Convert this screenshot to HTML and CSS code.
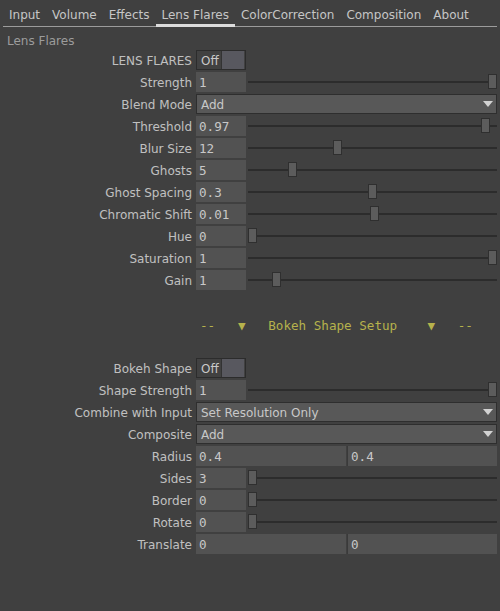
FILE: index.html
```html
<!DOCTYPE html>
<html>
<head>
<meta charset="utf-8">
<link rel="stylesheet" href="styles.css">
</head>
<body>
<div class="tabs">
  <div class="tab">Input</div>
  <div class="tab">Volume</div>
  <div class="tab">Effects</div>
  <div class="tab active">Lens Flares</div>
  <div class="tab">ColorCorrection</div>
  <div class="tab">Composition</div>
  <div class="tab">About</div>
</div>
<div class="section-title">Lens Flares</div>
<div class="form">
  <div class="label">LENS FLARES</div>
  <div class="control"><div class="toggle"><span class="toggle-text">Off</span><span class="toggle-knob"></span></div></div>

  <div class="label">Strength</div>
  <div class="control slider-row"><div class="field">1</div><div class="slider"><div class="handle" style="--p:1"></div></div></div>

  <div class="label">Blend Mode</div>
  <div class="control"><div class="select">Add<span class="arrow"></span></div></div>

  <div class="label">Threshold</div>
  <div class="control slider-row"><div class="field">0.97</div><div class="slider"><div class="handle" style="--p:0.97"></div></div></div>

  <div class="label">Blur Size</div>
  <div class="control slider-row"><div class="field">12</div><div class="slider"><div class="handle" style="--p:0.356"></div></div></div>

  <div class="label">Ghosts</div>
  <div class="control slider-row"><div class="field">5</div><div class="slider"><div class="handle" style="--p:0.167"></div></div></div>

  <div class="label">Ghost Spacing</div>
  <div class="control slider-row"><div class="field">0.3</div><div class="slider"><div class="handle" style="--p:0.502"></div></div></div>

  <div class="label">Chromatic Shift</div>
  <div class="control slider-row"><div class="field">0.01</div><div class="slider"><div class="handle" style="--p:0.51"></div></div></div>

  <div class="label">Hue</div>
  <div class="control slider-row"><div class="field">0</div><div class="slider"><div class="handle" style="--p:0"></div></div></div>

  <div class="label">Saturation</div>
  <div class="control slider-row"><div class="field">1</div><div class="slider"><div class="handle" style="--p:1"></div></div></div>

  <div class="label">Gain</div>
  <div class="control slider-row"><div class="field">1</div><div class="slider"><div class="handle" style="--p:0.1"></div></div></div>
</div>
<div class="divider">--   ▼   Bokeh Shape Setup    ▼   --</div>
<div class="form">
  <div class="label">Bokeh Shape</div>
  <div class="control"><div class="toggle"><span class="toggle-text">Off</span><span class="toggle-knob"></span></div></div>

  <div class="label">Shape Strength</div>
  <div class="control slider-row"><div class="field">1</div><div class="slider"><div class="handle" style="--p:1"></div></div></div>

  <div class="label">Combine with Input</div>
  <div class="control"><div class="select">Set Resolution Only<span class="arrow"></span></div></div>

  <div class="label">Composite</div>
  <div class="control"><div class="select">Add<span class="arrow"></span></div></div>

  <div class="label">Radius</div>
  <div class="control pair"><div class="field">0.4</div><div class="field split">0.4</div></div>

  <div class="label">Sides</div>
  <div class="control slider-row"><div class="field">3</div><div class="slider"><div class="handle" style="--p:0"></div></div></div>

  <div class="label">Border</div>
  <div class="control slider-row"><div class="field">0</div><div class="slider"><div class="handle" style="--p:0"></div></div></div>

  <div class="label">Rotate</div>
  <div class="control slider-row"><div class="field">0</div><div class="slider"><div class="handle" style="--p:0"></div></div></div>

  <div class="label">Translate</div>
  <div class="control pair"><div class="field">0</div><div class="field split">0</div></div>
</div>
</body>
</html>
```

FILE: styles.css
```css
html, body {
  margin: 0;
  padding: 0;
  background: #404040;
}
body {
  width: 500px;
  height: 611px;
  overflow: hidden;
  font-family: "DejaVu Sans", sans-serif;
  font-size: 12px;
  color: #c2c2c2;
}
.tabs {
  display: flex;
  margin: 0 3px 0 3px;
  border-bottom: 1px solid #9c9c9c;
  height: 26px;
}
.tab {
  padding: 5px 6px 0 6px;
  line-height: 21px;
  color: #c6c6c6;
  white-space: nowrap;
}
.tab.active {
  box-shadow: inset 0 -2px 0 #dcdcdc, 0 1px 0 #dcdcdc;
}
.section-title {
  height: 23px;
  box-sizing: border-box;
  padding: 5px 0 0 7px;
  line-height: 18px;
  color: #9c9c9c;
}
.form {
  display: grid;
  grid-template-columns: 192px 301px;
  column-gap: 4px;
  row-gap: 2px;
  grid-auto-rows: 20px;
}
.label {
  text-align: right;
  padding-top: 1px;
  line-height: 20px;
  white-space: nowrap;
  color: #c0c0c0;
}
.control {
  display: flex;
  height: 20px;
}
.toggle {
  width: 50px;
  height: 20px;
  box-sizing: border-box;
  border: 1px solid #2c2c2c;
  display: flex;
  background: #414141;
}
.toggle-text {
  flex: 1;
  padding: 1px 0 0 4px;
  line-height: 18px;
  color: #c8c8c8;
}
.toggle-knob {
  width: 22px;
  height: 18px;
  background: #58585f;
  border-left: 1px solid #333;
  margin-right: 1px;
}
.field {
  width: 50px;
  height: 20px;
  box-sizing: border-box;
  background: #525252;
  padding: 1px 0 0 3px;
  line-height: 19px;
  font-family: "DejaVu Sans Mono", monospace;
  font-size: 12.6px;
  color: #c8c8c8;
}
.slider-row {
  gap: 2px;
}
.slider {
  position: relative;
  flex: 1;
}
.slider::before {
  content: "";
  position: absolute;
  left: 0;
  right: 0;
  top: 9px;
  height: 2px;
  background: #2c2c2c;
}
.handle {
  position: absolute;
  top: 2px;
  width: 9px;
  height: 15px;
  box-sizing: border-box;
  background: #5c5c5c;
  border: 1px solid #2f2f2f;
  left: calc((100% - 9px) * var(--p));
}
.select {
  position: relative;
  flex: 1;
  height: 20px;
  box-sizing: border-box;
  background: #585858;
  border: 1px solid #2e2e2e;
  padding: 1px 0 0 4px;
  line-height: 18px;
  color: #c8c8c8;
}
.arrow {
  position: absolute;
  right: 3px;
  top: 6px;
  width: 0;
  height: 0;
  border-left: 5px solid transparent;
  border-right: 5px solid transparent;
  border-top: 6px solid #d2d2d2;
}
.pair {
  display: grid;
  grid-template-columns: 1fr 1fr;
  gap: 1px;
}
.pair .field {
  width: auto;
}
.pair .split {
  border-left: 1px solid #3a3a3a;
}
.divider {
  height: 68px;
  box-sizing: border-box;
  padding: 4px 0 0 200px;
  line-height: 64px;
  white-space: pre;
  font-family: "DejaVu Sans Mono", monospace;
  font-size: 12.6px;
  color: #b6b24c;
}
```
